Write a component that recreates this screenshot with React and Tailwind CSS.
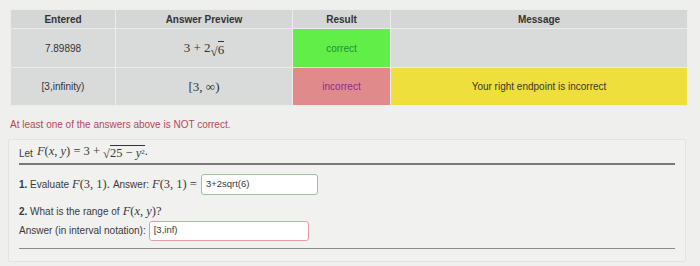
import React from 'react';

const serif = { fontFamily: '"Liberation Serif", serif' };

const M = ({ children }) => (
  <span className="font-['Liberation_Serif',serif] text-[12.5px]">{children}</span>
);

const Sqrt = ({ children, size = 'text-[12.5px]' }) => (
  <span className={`inline-flex items-end ${size}`}>
    <span className="leading-none">√</span>
    <span className="border-t border-[#333] leading-[1.1] pt-[1px]">{children}</span>
  </span>
);

export default function App() {
  return (
    <div className="w-[700px] h-[266px] bg-[#efefed] font-['Liberation_Sans',Arial,sans-serif] text-[#333] overflow-hidden pt-[9px]">
      <table className="ml-[10px] w-[678px] border-collapse text-[10px] text-[#333]">
        <thead>
          <tr className="h-[19px] bg-[#d5d6d6]">
            <th className="w-[105px] border border-[#ececec] font-bold">Entered</th>
            <th className="w-[177px] border border-[#ececec] font-bold">Answer Preview</th>
            <th className="w-[98px] border border-[#ececec] font-bold">Result</th>
            <th className="border border-[#ececec] font-bold">Message</th>
          </tr>
        </thead>
        <tbody>
          <tr className="h-[39px] bg-[#d9dada] text-center">
            <td className="border border-[#ececec]">7.89898</td>
            <td className="border border-[#ececec]">
              <span className="inline-flex items-end text-[13px]" style={serif}>
                3 + 2<Sqrt size="text-[13px]">6</Sqrt>
              </span>
            </td>
            <td className="border border-[#ececec] bg-[#62ee48] text-[#1f8f3a]">correct</td>
            <td className="border border-[#ececec]"></td>
          </tr>
          <tr className="h-[38px] bg-[#d9dada] text-center">
            <td className="border border-[#ececec]">[3,infinity)</td>
            <td className="border border-[#ececec]">
              <span className="text-[13px]" style={serif}>[3, ∞)</span>
            </td>
            <td className="border border-[#ececec] bg-[#e08a8c] text-[#8a2c8c]">incorrect</td>
            <td className="border border-[#ececec] bg-[#eedf3c] text-[#3a3a20]">Your right endpoint is incorrect</td>
          </tr>
        </tbody>
      </table>

      <p className="ml-[10px] mt-[11px] text-[10px] text-[#b34a5a]">At least one of the answers above is NOT correct.</p>

      <div className="ml-[8px] mt-[7px] w-[678px] h-[123px] bg-[#f1f1f0] border border-[#e2e2e2] rounded-[2px] px-[10px] pt-[2px] text-[10px] text-[#3a3a3a]">
        <div className="flex items-end pb-[2px] border-b-2 border-[#7a7a7a]">
          <span className="mr-[4px]">Let</span>
          <span className="inline-flex items-end text-[12.5px] whitespace-pre" style={serif}>
            <i>F</i>(<i>x</i>, <i>y</i>) = 3 + <Sqrt><span>25 − <i>y</i><sup className="text-[7px]">2</sup></span></Sqrt>.
          </span>
        </div>

        <div className="mt-[9px] flex items-center gap-[3px]">
          <span><b>1.</b> Evaluate</span>
          <M><i>F</i>(3, 1).</M>
          <span>Answer:</span>
          <M><i>F</i>(3, 1) =</M>
          <div className="ml-[1px] w-[117px] h-[21px] bg-white border border-[#9cc49a] rounded-[3px] px-[4px] flex items-center text-[9.5px]">3+2sqrt(6)</div>
        </div>

        <div className="mt-[7px] flex items-center gap-[3px]">
          <span><b>2.</b> What is the range of</span>
          <M><i>F</i>(<i>x</i>, <i>y</i>)?</M>
        </div>
        <div className="flex items-center gap-[3px]">
          <span>Answer (in interval notation):</span>
          <div className="w-[160px] h-[20px] bg-white border border-[#e2a0a6] rounded-[3px] px-[4px] flex items-center text-[9.5px]">[3,inf)</div>
        </div>

        <div className="mt-[7px] border-b border-[#8a8a8a]"></div>
      </div>
    </div>
  );
}
